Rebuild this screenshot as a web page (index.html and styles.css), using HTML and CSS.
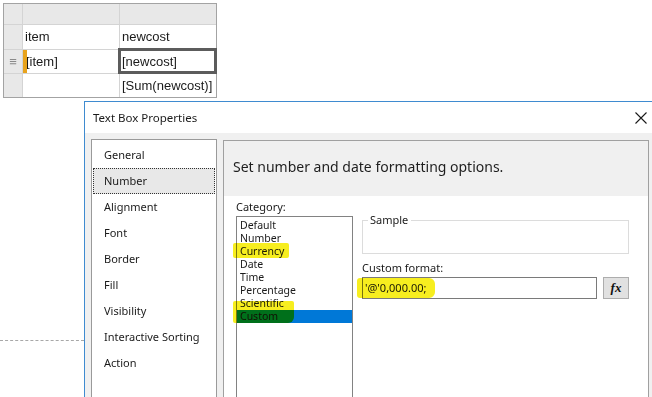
FILE: index.html
```html
<!DOCTYPE html>
<html>
<head>
<meta charset="utf-8">
<link rel="stylesheet" href="styles.css">
</head>
<body>
<div class="tablix">
  <div class="cell head handle"></div>
  <div class="cell head"></div>
  <div class="cell head"></div>
  <div class="cell handle"></div>
  <div class="cell">item</div>
  <div class="cell">newcost</div>
  <div class="cell handle grip">≡</div>
  <div class="cell marked">[item]</div>
  <div class="cell selected">[newcost]</div>
  <div class="cell handle"></div>
  <div class="cell"></div>
  <div class="cell">[Sum(newcost)]</div>
</div>
<div class="dashline"></div>

<div class="dialog">
  <div class="titlebar">
    <span class="title">Text Box Properties</span>
    <svg class="close" width="12" height="12" viewBox="0 0 12 12"><path d="M0.5 0.5 L11.5 11.5 M11.5 0.5 L0.5 11.5" stroke="#1a1a1a" stroke-width="1.1" fill="none"/></svg>
  </div>
  <div class="dbody">
    <ul class="nav">
      <li>General</li>
      <li class="active">Number</li>
      <li>Alignment</li>
      <li>Font</li>
      <li>Border</li>
      <li>Fill</li>
      <li>Visibility</li>
      <li>Interactive Sorting</li>
      <li>Action</li>
    </ul>
    <div class="panel">
      <div class="phead">Set number and date formatting options.</div>
      <div class="pcontent">
        <div class="catcol">
          <div class="lbl">Category:</div>
          <ul class="catlist">
            <li>Default</li>
            <li>Number</li>
            <li>Currency</li>
            <li>Date</li>
            <li>Time</li>
            <li>Percentage</li>
            <li>Scientific</li>
            <li class="sel">Custom</li>
          </ul>
          <span class="hl hl-currency"></span>
          <span class="hl hl-custom"></span>
        </div>
        <div class="rightcol">
          <fieldset class="sample"><legend>Sample</legend></fieldset>
          <div class="lbl fmtlbl">Custom format:</div>
          <div class="fmtrow">
            <div class="fmtinput">'@'0,000.00;<span class="hl hl-fmt"></span></div>
            <button class="fx">fx</button>
          </div>
        </div>
      </div>
    </div>
  </div>
</div>
</body>
</html>
```
FILE: styles.css
```css
html, body {
  margin: 0;
  padding: 0;
  background: #ffffff;
  overflow: hidden;
  width: 652px;
  height: 397px;
  position: relative;
}
body {
  font-family: "Liberation Sans", Arial, sans-serif;
}

/* ---- tablix ---- */
.tablix {
  margin: 3px 0 0 3px;
  display: grid;
  width: 214px;
  box-sizing: border-box;
  grid-template-columns: 18px 96px 96px;
  grid-template-rows: 20px 24px 23px 23px;
  gap: 1px;
  background: #d4d4d4;
  border: 1px solid #a3a3a3;
}
.cell {
  background: #ffffff;
  font-size: 13px;
  color: #1a1a1a;
  display: flex;
  align-items: center;
  padding-left: 2px;
  padding-bottom: 1px;
  position: relative;
}
.cell.head, .cell.handle {
  background: #e8e8e8;
}
.cell.grip {
  justify-content: center;
  padding: 0;
  color: #8a8a8a;
  font-size: 13px;
}
.cell.marked::before {
  content: "";
  position: absolute;
  left: 0;
  top: 0;
  width: 4px;
  height: 100%;
  background: #e8a31c;
}
.cell.marked {
  padding-left: 3px;
}
.cell.selected::after {
  content: "";
  position: absolute;
  left: -2px;
  top: -2px;
  right: -1px;
  bottom: -1px;
  border: 3px solid #5c5c5c;
}

.dashline {
  margin-top: 242px;
  width: 84px;
  border-top: 1px dashed #a8a8a8;
}

/* ---- dialog ---- */
.dialog {
  position: absolute;
  left: 84px;
  top: 101px;
  right: -12px;
  bottom: -30px;
  border-left: 1px solid #3f8bd0;
  border-top: 1px solid #3f8bd0;
  background: #f0f0f0;
  display: flex;
  flex-direction: column;
  font-family: "Noto Sans", "Open Sans", sans-serif;
  font-size: 11px;
  color: #1a1a1a;
}
.titlebar {
  height: 31px;
  background: #ffffff;
  display: flex;
  align-items: center;
  justify-content: space-between;
  padding: 0 17px 0 8px;
  flex: none;
}
.title {
  font-size: 11.5px;
}
.close {
  display: block;
}
.dbody {
  flex: 1;
  display: flex;
  gap: 6px;
  padding: 6px 0 0 6px;
  min-height: 0;
}
.nav {
  list-style: none;
  margin: 0;
  padding: 2px 1px;
  width: 122px;
  background: #ffffff;
  border: 1px solid #9a9a9a;
  flex: none;
}
.nav li {
  height: 26px;
  line-height: 24px;
  padding-left: 10px;
  box-sizing: border-box;
  border: 1px solid transparent;
}
.nav li.active {
  background: #e8e8e8;
  border: 1px dotted #333333;
}
.panel {
  margin-top: 1px;
  width: 424px;
  border: 1px solid #a0a0a0;
  background: #ffffff;
  flex: none;
  display: flex;
  flex-direction: column;
}
.phead {
  height: 55px;
  background: #f0f0f0;
  display: flex;
  align-items: center;
  padding-left: 9px;
  padding-bottom: 4px;
  box-sizing: border-box;
  font-size: 14px;
  color: #1e1e1e;
}
.pcontent {
  display: flex;
  padding: 4px 0 0 12px;
  flex: 1;
  min-height: 0;
}
.lbl {
  height: 14px;
  line-height: 14px;
}
.catcol {
  width: 117px;
  display: flex;
  flex-direction: column;
  position: relative;
}
.catlist {
  list-style: none;
  margin: 2px 0 0 0;
  padding: 2px 0 0 0;
  border: 1px solid #828282;
  flex: 1;
  background: #ffffff;
  font-size: 10.5px;
}
.catlist li {
  height: 13px;
  line-height: 13px;
  padding-left: 3px;
}
.catlist li.sel {
  background: #0078d7;
  color: #111111;
}
.hl {
  position: absolute;
  background: #f7ee1f;
  mix-blend-mode: multiply;
  border-radius: 2px;
}
.hl-currency {
  left: -3px;
  top: 43px;
  width: 56px;
  height: 15px;
}
.hl-custom {
  left: -3px;
  top: 101px;
  width: 61px;
  height: 22px;
  border-radius: 2px 2px 6px 2px;
}
.rightcol {
  margin-left: 9px;
  width: 267px;
  display: flex;
  flex-direction: column;
}
.sample {
  margin: 14px 0 0 0;
  padding: 0;
  height: 40px;
  box-sizing: border-box;
  border: 1px solid #dcdcdc;
}
.sample legend {
  margin-left: 5px;
  padding: 0 3px 0 2px;
  line-height: 12px;
}
.fmtlbl {
  margin-top: 7px;
}
.fmtrow {
  margin-top: 2px;
  display: flex;
  align-items: flex-start;
  width: 267px;
  position: relative;
}
.fmtinput {
  width: 235px;
  height: 22px;
  box-sizing: border-box;
  border: 1px solid #7a7a7a;
  line-height: 20px;
  padding-left: 2px;
  position: relative;
}
.hl-fmt {
  left: -6px;
  top: 0;
  width: 78px;
  height: 20px;
  border-radius: 3px 6px 6px 3px;
}
.fx {
  margin-left: 6px;
  width: 26px;
  height: 22px;
  box-sizing: border-box;
  border: 1px solid #adadad;
  background: #e1e1e1;
  font-family: "Liberation Serif", "Times New Roman", serif;
  font-weight: bold;
  font-style: italic;
  font-size: 13px;
  color: #111;
  padding: 0;
  line-height: 18px;
}
```
